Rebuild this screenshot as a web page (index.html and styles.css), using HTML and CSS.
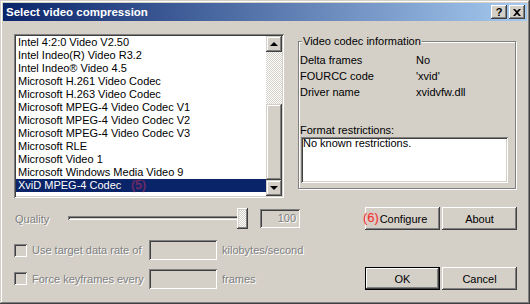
FILE: index.html
```html
<!DOCTYPE html>
<html lang="en">
<head>
    <meta charset="UTF-8">
    <title>Select video compression</title>
    <link rel="stylesheet" href="styles.css">
</head>
<body>
    <div class="window">
        <!-- title bar -->
        <div class="titlebar">
            <span class="title">Select video compression</span>
            <div class="caption-btns">
                <span class="cbtn help">?</span>
                <span class="cbtn">
                    <svg width="8" height="7" viewBox="0 0 8 7"><path d="M0 0h2l2 2 2-2h2L5 3.5 8 7H6L4 5 2 7H0l3-3.5z" fill="#000"/></svg>
                </span>
            </div>
        </div>

        <div class="content">
            <div class="top">
                <!-- codec list -->
                <div class="listbox">
                    <ul class="items">
                        <li>Intel 4:2:0 Video V2.50</li>
                        <li>Intel Indeo(R) Video R3.2</li>
                        <li>Intel Indeo® Video 4.5</li>
                        <li>Microsoft H.261 Video Codec</li>
                        <li>Microsoft H.263 Video Codec</li>
                        <li>Microsoft MPEG-4 Video Codec V1</li>
                        <li>Microsoft MPEG-4 Video Codec V2</li>
                        <li>Microsoft MPEG-4 Video Codec V3</li>
                        <li>Microsoft RLE</li>
                        <li>Microsoft Video 1</li>
                        <li>Microsoft Windows Media Video 9</li>
                        <li class="selected">XviD MPEG-4 Codec<span class="mark5">(5)</span></li>
                    </ul>
                    <div class="scrollbar">
                        <span class="sbtn"><span class="arrow up"></span></span>
                        <div class="track"><span class="thumb"></span></div>
                        <span class="sbtn"><span class="arrow down"></span></span>
                    </div>
                </div>

                <!-- codec info -->
                <div class="group">
                    <div class="legend">Video codec information</div>
                    <div class="info">
                        <span>Delta frames</span><span>No</span>
                        <span>FOURCC code</span><span>'xvid'</span>
                        <span>Driver name</span><span>xvidvfw.dll</span>
                    </div>
                    <div class="restr-label">Format restrictions:</div>
                    <div class="restr">No known restrictions.</div>
                </div>
            </div>

            <div class="row row-quality">
                <span class="quality-label disabled">Quality</span>
                <div class="slider">
                    <span class="channel"></span>
                    <span class="slider-thumb"></span>
                </div>
                <span class="edit small disabled">100</span>
                <div class="buttons">
                    <span class="button configure"><span class="mark6">(6)</span>Configure</span>
                    <span class="button">About</span>
                </div>
            </div>

            <div class="row row-check">
                <div class="check-cell">
                    <span class="checkbox"></span>
                    <span class="disabled">Use target data rate of</span>
                </div>
                <span class="edit"></span>
                <span class="unit disabled">kilobytes/second</span>
            </div>

            <div class="row row-last">
                <div class="check-cell">
                    <span class="checkbox"></span>
                    <span class="disabled">Force keyframes every</span>
                </div>
                <span class="edit"></span>
                <span class="unit disabled">frames</span>
                <div class="buttons">
                    <span class="button default">OK</span>
                    <span class="button">Cancel</span>
                </div>
            </div>
        </div>
    </div>
</body>
</html>
```

FILE: styles.css
```css
* {
    box-sizing: border-box;
}
body {
    margin: 0;
    font-family: "Liberation Sans", Arial, sans-serif;
    font-size: 11px;
    color: #000;
}
.window {
    width: 530px;
    height: 304px;
    padding: 3px;
    background: #d4d0c8;
    box-shadow: inset -1px -1px #404040, inset 1px 1px #d4d0c8, inset -2px -2px #808080, inset 2px 2px #fff;
}
/* title bar */
.titlebar {
    height: 18px;
    display: flex;
    align-items: center;
    padding: 0 2px 0 3px;
    background: linear-gradient(90deg, #0a246a 0%, #a6caf0 100%);
}
.title {
    flex: 1;
    color: #fff;
    font-weight: bold;
    font-size: 11.5px;
}
.caption-btns {
    display: flex;
    gap: 2px;
}
.cbtn {
    width: 16px;
    height: 14px;
    display: flex;
    align-items: center;
    justify-content: center;
    background: #d4d0c8;
    box-shadow: inset -1px -1px #404040, inset 1px 1px #fff, inset -2px -2px #808080, inset 2px 2px #d4d0c8;
}
.cbtn.help {
    font-weight: bold;
    font-size: 11px;
    line-height: 14px;
}
/* body */
.content {
    padding: 13px 10px 0 11px;
}
.top {
    display: flex;
    height: 164px;
}
.listbox {
    width: 270px;
    height: 164px;
    display: flex;
    padding: 2px;
    background: #fff;
    box-shadow: inset 1px 1px #808080, inset -1px -1px #fff, inset 2px 2px #404040, inset -2px -2px #d4d0c8;
}
.items {
    flex: 1;
    list-style: none;
    margin: 0;
    padding: 0;
}
.items li {
    height: 13px;
    line-height: 13px;
    padding-left: 2px;
    white-space: nowrap;
}
.items li.selected {
    background: #0a246a;
    color: #fff;
}
.mark5 {
    margin-left: 10px;
    font-size: 12px;
    color: #7a2d62;
    text-shadow: 0 0 2px #5a2a6a;
}
.scrollbar {
    width: 16px;
    display: flex;
    flex-direction: column;
}
.sbtn {
    height: 16px;
    display: flex;
    align-items: center;
    justify-content: center;
    background: #d4d0c8;
    box-shadow: inset -1px -1px #404040, inset 1px 1px #d4d0c8, inset -2px -2px #808080, inset 2px 2px #fff;
}
.arrow {
    width: 0;
    height: 0;
    border-left: 4px solid transparent;
    border-right: 4px solid transparent;
}
.arrow.up {
    border-bottom: 4px solid #000;
}
.arrow.down {
    border-top: 4px solid #000;
}
.track {
    flex: 1;
    display: flex;
    flex-direction: column;
    justify-content: flex-end;
    background: repeating-conic-gradient(#fff 0 25%, #d4d0c8 0 50%) 0 0 / 2px 2px;
}
.thumb {
    height: 76px;
    background: #d4d0c8;
    box-shadow: inset -1px -1px #404040, inset 1px 1px #d4d0c8, inset -2px -2px #808080, inset 2px 2px #fff;
}
/* codec information group */
.group {
    width: 218px;
    height: 148px;
    margin: 7px 0 0 14px;
    padding: 0 2px 0 1px;
    border: 1px solid #808080;
    box-shadow: inset 1px 1px #fff, 1px 1px #fff;
}
.legend {
    display: table;
    margin: -7px 0 0 2px;
    padding: 0 1px;
    line-height: 13px;
    background: #d4d0c8;
}
.info {
    display: grid;
    grid-template-columns: 116px auto;
    margin-top: 4px;
    line-height: 16px;
}
.restr-label {
    margin-top: 24px;
    line-height: 13px;
}
.restr {
    width: 207px;
    height: 46px;
    margin-left: 1px;
    padding: 0 2px;
    line-height: 13px;
    background: #fff;
    box-shadow: inset 1px 1px #808080, inset -1px -1px #fff, inset 2px 2px #404040, inset -2px -2px #d4d0c8;
}
/* lower controls */
.row {
    display: flex;
    align-items: center;
}
.row-quality {
    height: 23px;
    margin-top: 9px;
}
.row-check {
    height: 20px;
    margin-top: 10px;
}
.row-last {
    height: 23px;
    margin-top: 7px;
}
.disabled {
    color: #808080;
    text-shadow: 1px 1px 0 #fff;
}
.quality-label {
    width: 50px;
    padding-left: 1px;
}
.slider {
    width: 186px;
    height: 23px;
    position: relative;
}
.channel {
    position: absolute;
    left: 4px;
    right: 3px;
    top: 9px;
    height: 4px;
    box-shadow: inset 1px 1px #808080, inset -1px -1px #fff, inset 2px 2px #404040, inset -2px -2px #d4d0c8;
}
.slider-thumb {
    position: absolute;
    left: 173px;
    top: 1px;
    width: 11px;
    height: 21px;
    background: repeating-conic-gradient(#fff 0 25%, #d4d0c8 0 50%) 0 0 / 2px 2px;
    box-shadow: inset -1px -1px #404040, inset 1px 1px #fff, inset -2px -2px #808080, inset 2px 2px #d4d0c8;
}
.edit {
    width: 68px;
    height: 20px;
    background: #d4d0c8;
    box-shadow: inset 1px 1px #808080, inset -1px -1px #fff, inset 2px 2px #404040, inset -2px -2px #d4d0c8;
}
.edit.small {
    width: 40px;
    height: 19px;
    margin-left: 10px;
    padding-right: 4px;
    line-height: 19px;
    text-align: right;
}
.buttons {
    margin-left: auto;
    display: flex;
    gap: 2px;
}
.button {
    width: 75px;
    height: 23px;
    display: flex;
    align-items: center;
    justify-content: center;
    position: relative;
    background: #d4d0c8;
    box-shadow: inset -1px -1px #404040, inset 1px 1px #fff, inset -2px -2px #808080, inset 2px 2px #d4d0c8;
}
.button.default {
    border: 1px solid #000;
    box-shadow: inset -1px -1px #404040, inset 1px 1px #fff, inset -2px -2px #808080;
}
.configure {
    padding-left: 2px;
}
.mark6 {
    position: absolute;
    left: -2px;
    top: 3px;
    font-size: 13px;
    color: #e8302a;
    text-shadow: 0 0 3px #ffb0b0;
}
.check-cell {
    width: 135px;
    display: flex;
    align-items: center;
    gap: 5px;
}
.checkbox {
    width: 13px;
    height: 13px;
    background: #d4d0c8;
    box-shadow: inset 1px 1px #808080, inset -1px -1px #fff, inset 2px 2px #404040, inset -2px -2px #d4d0c8;
}
.unit {
    margin-left: 5px;
}
```
